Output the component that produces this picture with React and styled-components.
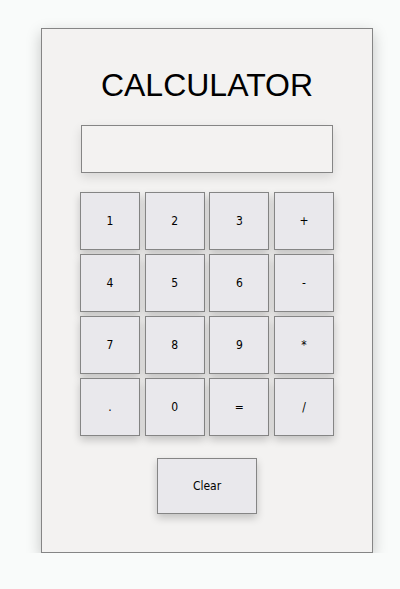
import styled, { createGlobalStyle } from "styled-components";

const GlobalStyle = createGlobalStyle`
  html, body {
    margin: 0;
    padding: 0;
    background: #f9fbfa;
    font-family: "Liberation Sans", Arial, sans-serif;
  }
`;

const Page = styled.div`
  padding: 28px 0 0 41px;
`;

const Card = styled.div`
  box-sizing: border-box;
  width: 332px;
  height: 525px;
  padding: 38px 0 0;
  background: #f3f2f1;
  border: 1px solid #858585;
  box-shadow: 0 5px 14px rgba(0, 0, 0, 0.22);
  display: flex;
  flex-direction: column;
  align-items: center;
`;

const Title = styled.h1`
  margin: 0;
  font-size: 32px;
  line-height: 36px;
  font-weight: 400;
  color: #000;
`;

const Display = styled.input`
  box-sizing: border-box;
  width: 252px;
  height: 48px;
  margin-top: 22px;
  background: #f3f2f1;
  border: 1px solid #858585;
  box-shadow: 0 4px 10px rgba(0, 0, 0, 0.12);
  outline: none;
`;

const Keys = styled.div`
  margin-top: 19px;
  display: grid;
  grid-template-columns: repeat(4, 60px);
  grid-auto-rows: 58px;
  column-gap: 4.67px;
  row-gap: 4px;
`;

const Key = styled.button`
  box-sizing: border-box;
  width: ${(p) => p.$w || 60}px;
  height: ${(p) => p.$h || 58}px;
  padding: 0;
  background: #e9e8ec;
  border: 1px solid #858585;
  box-shadow: 0 4px 8px rgba(0, 0, 0, 0.2);
  font-family: "DejaVu Sans Condensed", "DejaVu Sans", Tahoma, sans-serif;
  font-stretch: condensed;
  font-size: 12px;
  color: #000;
  cursor: pointer;
`;

const ClearKey = styled(Key)`
  margin-top: 22px;
`;

const keys = ["1", "2", "3", "+", "4", "5", "6", "-", "7", "8", "9", "*", ".", "0", "=", "/"];

export default function App() {
  return (
    <>
      <GlobalStyle />
      <Page>
        <Card>
          <Title>CALCULATOR</Title>
          <Display type="text" readOnly />
          <Keys>
            {keys.map((k) => (
              <Key key={k}>{k}</Key>
            ))}
          </Keys>
          <ClearKey $w={100} $h={56}>Clear</ClearKey>
        </Card>
      </Page>
    </>
  );
}
